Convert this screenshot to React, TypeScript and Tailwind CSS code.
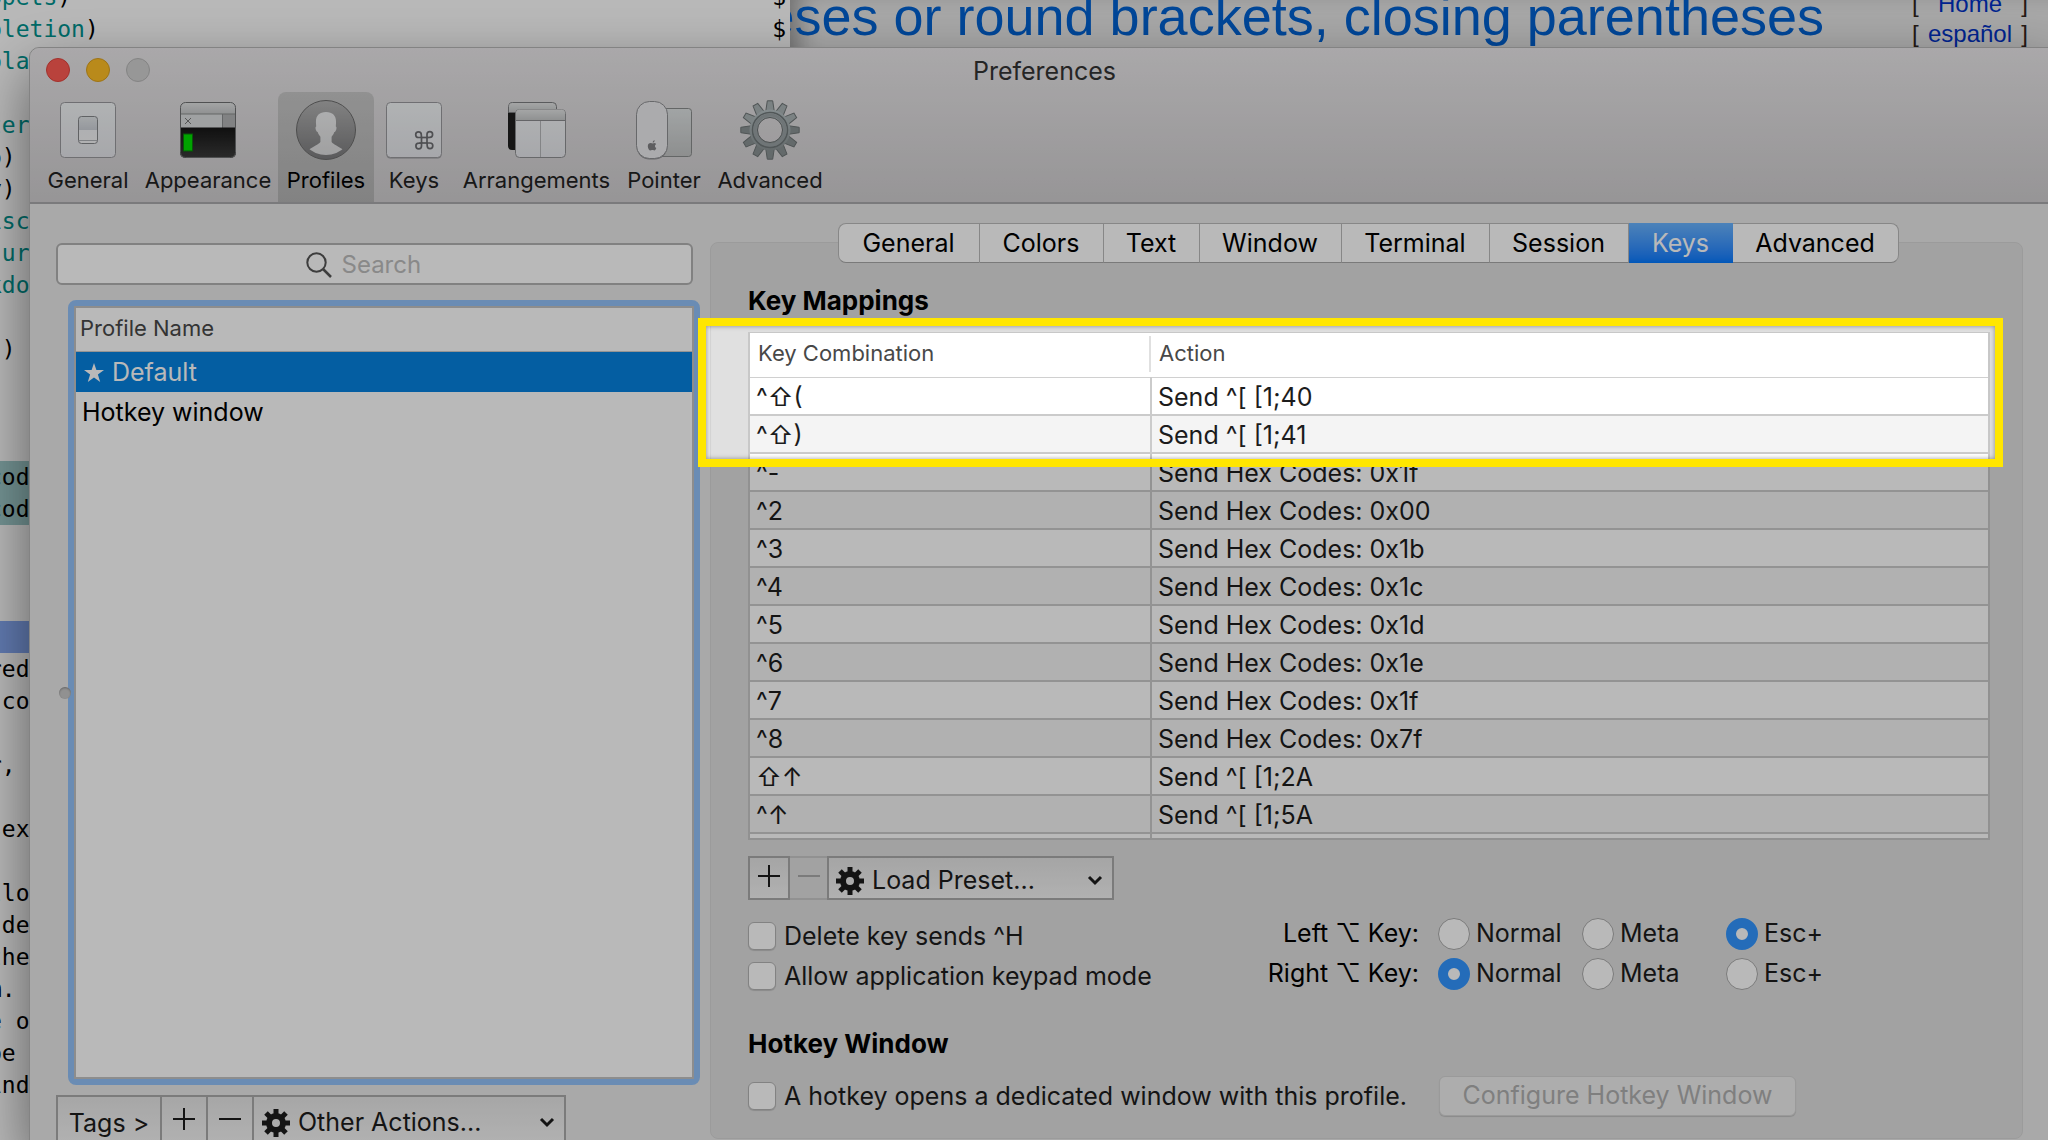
import React from "react";

const editorLines: { n: number; text: string; tone: string }[] = [
  { n: 0, text: "ppets", tone: "text-[#009490]" },
  { n: 1, text: "pletion", tone: "text-[#009490]" },
  { n: 2, text: "pla", tone: "text-[#009490]" },
  { n: 3, text: "", tone: "" },
  { n: 4, text: "ter", tone: "text-[#009490]" },
  { n: 5, text: "o)", tone: "text-black" },
  { n: 6, text: "y)", tone: "text-black" },
  { n: 7, text: "isc", tone: "text-[#009490]" },
  { n: 8, text: ":ur", tone: "text-[#009490]" },
  { n: 9, text: "kdo", tone: "text-[#009490]" },
  { n: 10, text: "", tone: "" },
  { n: 11, text: ".)", tone: "text-black" },
  { n: 12, text: "", tone: "" },
  { n: 13, text: "", tone: "" },
  { n: 14, text: "", tone: "" },
  { n: 15, text: "cod", tone: "text-black bg-[#a0cccc]" },
  { n: 16, text: "cod", tone: "text-black bg-[#a0cccc]" },
  { n: 17, text: "", tone: "" },
  { n: 18, text: "", tone: "" },
  { n: 19, text: "", tone: "" },
  { n: 20, text: "", tone: "bg-[#87aaf5]" },
  { n: 21, text: "red", tone: "text-black" },
  { n: 22, text: " co", tone: "text-black" },
  { n: 23, text: "", tone: "" },
  { n: 24, text: "r,", tone: "text-black" },
  { n: 25, text: "", tone: "" },
  { n: 26, text: "sex", tone: "text-black" },
  { n: 27, text: "", tone: "" },
  { n: 28, text: "llo", tone: "text-black" },
  { n: 29, text: " de", tone: "text-black" },
  { n: 30, text: "the", tone: "text-black" },
  { n: 31, text: "m.", tone: "text-black" },
  { n: 32, text: "e o", tone: "text-black" },
  { n: 33, text: "be", tone: "text-black" },
  { n: 34, text: "ind", tone: "text-black" },
];

function Desktop() {
  return (
    <div aria-hidden="true" className="absolute inset-0 flex overflow-hidden bg-white">
      <div className="flex w-[790px] shrink-0 justify-between overflow-hidden bg-white font-['DejaVu_Sans_Mono'] text-[23px] leading-8">
        <div className="-mt-[19px] -ml-3 w-60">
          {editorLines.map((line) => (
            <div key={line.n} className={`h-8 whitespace-pre ${line.tone}`}>
              {line.text}
              {line.n < 2 && <span className="text-black">)</span>}
            </div>
          ))}
        </div>
        <div className="-mt-[19px] mr-1 text-black">
          <div className="h-8">$</div>
          <div className="h-8">$</div>
        </div>
      </div>
      <div className="flex flex-1 items-start justify-end overflow-hidden bg-[#e8e8e8] pr-5 font-['Liberation_Sans'] shadow-[inset_20px_0_24px_-12px_rgba(0,0,0,0.35)]">
        <div className="-mt-[15px] mr-[88px] text-[54px] leading-[62px] whitespace-nowrap text-[#0062d3]">
          parentheses or round brackets, closing parentheses
        </div>
        <div className="-mt-[11px] w-[116px] shrink-0 text-2xl leading-[30px] text-[#33251c]">
          <div className="flex justify-between">
            <span>[</span>
            <span className="text-[#0032c5]">Home</span>
            <span>]</span>
          </div>
          <div className="flex justify-between">
            <span>[</span>
            <span className="text-[#0032c5]">español</span>
            <span>]</span>
          </div>
        </div>
      </div>
    </div>
  );
}

function GeneralIcon() {
  return (
    <svg viewBox="0 0 60 60" className="size-[60px]">
      <defs>
        <linearGradient id="plate" x1="0" y1="0" x2="0" y2="1">
          <stop offset="0" stopColor="#f3f6f7" />
          <stop offset="1" stopColor="#e6e7ec" />
        </linearGradient>
        <linearGradient id="toggle" x1="0" y1="0" x2="0" y2="1">
          <stop offset="0" stopColor="#e4e8ea" />
          <stop offset="0.5" stopColor="#cdd1d8" />
          <stop offset="0.5" stopColor="#f2f3f5" />
          <stop offset="1" stopColor="#f4f4f6" />
        </linearGradient>
      </defs>
      <rect x="2.5" y="2.5" width="55" height="55" rx="4" fill="url(#plate)" stroke="#9a9a9e" />
      <rect x="20.5" y="16.5" width="19" height="27" rx="3" fill="url(#toggle)" stroke="#85878b" />
      <path d="M21 40.5h18" stroke="#b0b2b6" />
    </svg>
  );
}

function AppearanceIcon() {
  return (
    <svg viewBox="0 0 60 60" className="size-[60px]">
      <defs>
        <linearGradient id="bar" x1="0" y1="0" x2="0" y2="1">
          <stop offset="0" stopColor="#e4e6e6" />
          <stop offset="1" stopColor="#c6c8c9" />
        </linearGradient>
        <linearGradient id="screen" x1="0" y1="0" x2="0" y2="1">
          <stop offset="0" stopColor="#161616" />
          <stop offset="1" stopColor="#3c3c3c" />
        </linearGradient>
        <clipPath id="frame">
          <rect x="2" y="2" width="56" height="56" rx="5" />
        </clipPath>
      </defs>
      <g clipPath="url(#frame)">
        <rect x="2" y="2" width="56" height="12" fill="url(#bar)" />
        <rect x="2" y="14" width="42" height="14" fill="#dcdee0" />
        <rect x="44" y="14" width="14" height="14" fill="#b2b3b5" />
        <path d="M2 14h56M44.5 14v14" stroke="#8b8d8e" />
        <rect x="2" y="27.500" width="56" height="31" fill="url(#screen)" />
        <path d="M7 18l6 6M13 18l-6 6" stroke="#777" />
        <rect x="5" y="33.500" width="10" height="18" fill="#0a7a0a" />
        <rect x="6" y="34.500" width="8" height="16" fill="#00e000" />
      </g>
      <rect x="2.5" y="2.500" width="55" height="55" rx="5" fill="none" stroke="#6f7072" />
    </svg>
  );
}

function ProfilesIcon() {
  return (
    <svg viewBox="0 0 60 60" className="size-[60px]">
      <defs>
        <linearGradient id="disc" x1="0" y1="0" x2="0" y2="1">
          <stop offset="0" stopColor="#b4b4b4" />
          <stop offset="1" stopColor="#7c7c7e" />
        </linearGradient>
        <linearGradient id="bust" x1="0" y1="0" x2="0" y2="1">
          <stop offset="0" stopColor="#eff0f1" />
          <stop offset="1" stopColor="#dcdcdd" />
        </linearGradient>
        <clipPath id="inner">
          <circle cx="30" cy="28" r="27" />
        </clipPath>
      </defs>
      <circle cx="30" cy="30" r="29.500" fill="url(#disc)" stroke="#6c6c6c" />
      <path
        clipPath="url(#inner)"
        d="M30 12c7 0 10.500 4 10 11 0 1.500-.2 2.500-.2 3.500 1.200.3.800 3-.4 4.800-.4.700-.9.800-1.200 1-.6 2-1.600 3.400-2.600 4.500v5.200c2 2.500 7 4.500 11.400 7.500L44 57H16l-3-7.500c4.400-3 9.400-5 11.400-7.500v-5.200c-1-1.100-2-2.500-2.600-4.500-.3-.2-.8-.3-1.200-1-1.200-1.800-1.600-4.500-.4-4.800 0-1-.2-2-.2-3.500-.5-7 3-11 10-11z"
        fill="url(#bust)"
      />
    </svg>
  );
}

function KeysIcon() {
  return (
    <svg viewBox="0 0 60 60" className="size-[60px]">
      <rect x="2.500" y="3.500" width="55" height="55" rx="4" fill="#97979b" />
      <rect x="2.500" y="2.500" width="55" height="55" rx="4" fill="url(#plate)" stroke="#9a9a9e" />
      <g fill="none" stroke="#6d6e72" strokeWidth="1.700">
        <rect x="37.500" y="37.500" width="5.500" height="5.500" />
        <path d="M37.500 37.500h-3a2.800 2.800 0 1 1 2.800-2.800zM43 37.500v-3a2.800 2.800 0 1 1 2.800 2.800zM43 43h3a2.800 2.800 0 1 1-2.800 2.800zM37.500 43v3a2.800 2.800 0 1 1-2.800-2.800z" />
      </g>
    </svg>
  );
}

function ArrangementsIcon() {
  return (
    <svg viewBox="0 0 60 60" className="size-[60px]">
      <path d="M1 12h12v38H5a4 4 0 0 1-4-4z" fill="#1f1f1f" />
      <path d="M1.500 12.500V6.500a4 4 0 0 1 4-4h40a4 4 0 0 1 4 4v6z" fill="url(#bar)" stroke="#7d7e80" />
      <rect x="8.500" y="9.500" width="50" height="48" rx="4" fill="url(#plate)" stroke="#8f9092" />
      <path d="M9 20v-6.500a4 4 0 0 1 4-4h41a4 4 0 0 1 4 4V20z" fill="url(#bar)" />
      <path d="M9 20.500h49" stroke="#8b8c8e" />
      <path d="M33.500 21v36" stroke="#b5b6b9" />
    </svg>
  );
}

function PointerIcon() {
  return (
    <svg viewBox="0 0 60 60" className="size-[60px]">
      <defs>
        <linearGradient id="pad" x1="0" y1="0" x2="0" y2="1">
          <stop offset="0" stopColor="#dfe3e4" />
          <stop offset="1" stopColor="#c3c5c5" />
        </linearGradient>
      </defs>
      <rect x="12.500" y="8.500" width="45" height="48" rx="3" fill="url(#pad)" stroke="#8b8d8d" />
      <rect x="2.500" y="2.500" width="31" height="57" rx="13" fill="#8f8f92" />
      <rect x="2.500" y="1.500" width="31" height="57" rx="13" fill="#ececef" stroke="#8f9093" />
      <path
        transform="translate(-1.500 0)"
        d="M20.500 43.400c-.8 0-1.400-.4-2.300-.4-1.600 0-2.900 1.200-2.900 3.200 0 2 1.400 4.300 2.700 4.300.6 0 .9-.4 1.900-.4s1.200.4 1.800.4c.9 0 1.800-1.400 2.100-2.500-1.900-.9-1.800-3-.1-4-.5-.6-1.200-1-2-1-.5 0-.9.400-1.200.4zM20.200 42.600c1.300-.1 2.100-1.200 2-2.400-1.200.1-2.100 1.200-2 2.400z"
        fill="#808084"
      />
    </svg>
  );
}

function AdvancedIcon() {
  return (
    <svg viewBox="0 0 60 60" className="size-[60px]">
      <defs>
        <linearGradient id="cog" gradientUnits="userSpaceOnUse" x1="0" y1="0" x2="0" y2="60">
          <stop offset="0" stopColor="#c0cbce" />
          <stop offset="1" stopColor="#828a8b" />
        </linearGradient>
        <mask id="hole">
          <rect width="60" height="60" fill="#fff" />
          <circle cx="30" cy="30" r="12.500" fill="#000" />
        </mask>
      </defs>
      <g mask="url(#hole)">
        {Array.from({ length: 12 }, (_, i) => (
          <path
            key={i}
            d="M25.500 13l1.800-12.200h5.400L34.500 13z"
            fill={i > 2 && i < 10 ? "#8b9394" : "#aab3b5"}
            stroke="#6e7576"
            transform={`rotate(${i * 30} 30 30)`}
          />
        ))}
        <circle cx="30" cy="30" r="20.500" fill="url(#cog)" />
        <circle cx="30" cy="30" r="17.500" fill="none" stroke="#70787a" strokeWidth="1.500" />
        <circle cx="30" cy="30" r="15" fill="none" stroke="#9aa2a4" strokeWidth="3" />
      </g>
      <circle cx="30" cy="30" r="12.500" fill="none" stroke="#676d6e" />
    </svg>
  );
}

function SmallGear() {
  return (
    <svg viewBox="0 0 28 28" className="size-7 shrink-0">
      <g stroke="#1c1c1c" strokeWidth="5">
        <path d="M14 0v9M14 19v9M0 14h9M19 14h9M4 4l6.500 6.500M17.500 17.500L24 24M24 4l-6.500 6.500M10.500 17.500L4 24" />
      </g>
      <circle cx="14" cy="14" r="7" fill="none" stroke="#1c1c1c" strokeWidth="6" />
    </svg>
  );
}

function Chevron() {
  return (
    <svg viewBox="0 0 16 16" className="pointer-events-none size-4 shrink-0">
      <path d="M2 4l6 6 6-6" fill="none" stroke="#1c1c1c" strokeWidth="3" />
    </svg>
  );
}

function Plus() {
  return (
    <svg viewBox="0 0 22 22" className="size-[22px]">
      <path d="M11 0v22M0 11h22" stroke="currentColor" strokeWidth="2" />
    </svg>
  );
}

function Minus() {
  return (
    <svg viewBox="0 0 22 22" className="size-[22px]">
      <path d="M0 11h22" stroke="currentColor" strokeWidth="2" />
    </svg>
  );
}

const toolbar = [
  { label: "General", icon: <GeneralIcon />, width: "w-[100px]" },
  { label: "Appearance", icon: <AppearanceIcon />, width: "w-[140px]" },
  { label: "Profiles", icon: <ProfilesIcon />, width: "w-24" },
  { label: "Keys", icon: <KeysIcon />, width: "w-20" },
  { label: "Arrangements", icon: <ArrangementsIcon />, width: "w-[165px]" },
  { label: "Pointer", icon: <PointerIcon />, width: "w-[90px]" },
  { label: "Advanced", icon: <AdvancedIcon />, width: "w-[122px]" },
];

const tabs = [
  { label: "General", width: "w-[142px]" },
  { label: "Colors", width: "w-[124px]" },
  { label: "Text", width: "w-24" },
  { label: "Window", width: "w-[142px]" },
  { label: "Terminal", width: "w-[148px]" },
  { label: "Session", width: "w-[139px]" },
  { label: "Keys", width: "w-[104px]" },
  { label: "Advanced", width: "w-[166px]" },
];

const mappings = [
  ["^⇧(", "Send ^[ [1;40"],
  ["^⇧)", "Send ^[ [1;41"],
  ["^-", "Send Hex Codes: 0x1f"],
  ["^2", "Send Hex Codes: 0x00"],
  ["^3", "Send Hex Codes: 0x1b"],
  ["^4", "Send Hex Codes: 0x1c"],
  ["^5", "Send Hex Codes: 0x1d"],
  ["^6", "Send Hex Codes: 0x1e"],
  ["^7", "Send Hex Codes: 0x1f"],
  ["^8", "Send Hex Codes: 0x7f"],
  ["⇧↑", "Send ^[ [1;2A"],
  ["^↑", "Send ^[ [1;5A"],
];

function TitleBar() {
  return (
    <header className="h-[156px] rounded-t-[10px] border-b-2 border-[#a9a9ab] bg-linear-to-b from-[#eae8ea] to-[#d0ced0]">
      <div className="relative flex h-11 items-center justify-center pt-0.5">
        <div className="absolute top-2.5 left-4 flex gap-4">
          <button aria-label="Close" className="size-6 rounded-full border border-[#e0443e] bg-[#ff5c53]" />
          <button aria-label="Minimize" className="size-6 rounded-full border border-[#d9a020] bg-[#ffbf26]" />
          <button aria-label="Zoom" className="size-6 rounded-full border border-[#b6b6b6] bg-[#d0d0d0]" />
        </div>
        <h1 className="text-[25px] leading-8 text-[#333]">Preferences</h1>
      </div>
      <nav className="flex h-[110px] pl-2">
        {toolbar.map((item) => (
          <button
            key={item.label}
            className={`flex shrink-0 flex-col items-center rounded-t-lg pt-2 text-[22px] leading-7 ${item.width} ${
              item.label === "Profiles" ? "bg-linear-to-b from-[#c8c8c8] to-[#b4b4b4] text-black" : "text-[#222]"
            }`}
          >
            {item.icon}
            <span className="mt-1.5">{item.label}</span>
          </button>
        ))}
      </nav>
    </header>
  );
}

function Sidebar() {
  return (
    <aside className="flex flex-col pt-[39px] pl-[26px]">
      <label className="mr-[17px] flex h-[42px] shrink-0 items-center justify-center gap-2.5 rounded-md border-2 border-[#b2b2b2] bg-white pt-0.5 pr-2">
        <svg viewBox="0 0 26 26" className="size-[26px] shrink-0">
          <circle cx="10.500" cy="10.500" r="9.200" fill="none" stroke="#555" strokeWidth="2" />
          <path d="M17 17l8 8" stroke="#555" strokeWidth="2.500" />
        </svg>
        <input
          type="text"
          aria-label="Search"
          placeholder="Search"
          className="w-[94px] bg-transparent text-[24px] leading-8 outline-none placeholder:text-[#bdbdbd]"
        />
      </label>
      <div className="relative mt-[15px] mr-[10px] ml-3 flex-1 rounded-lg border-[6px] border-[#93c2f9]">
        <div className="h-full border-2 border-[#c3c3c3] bg-white">
          <h2 className="flex h-11 items-center border-b border-[#ccc] px-1 pb-0.5 text-[22px] text-[#484848]">
            Profile Name
          </h2>
          <ul className="text-[25px]">
            <li className="flex h-10 items-center gap-2 bg-[#0682e0] pt-0.5 pl-2 text-white">
              <svg viewBox="0 0 20 20" className="size-5">
                <path d="M10 0l2.400 7.100H20l-6.100 4.500 2.300 7.400L10 14.600 3.800 19l2.300-7.400L0 7.100h7.600z" fill="currentColor" />
              </svg>
              Default
            </li>
            <li className="flex h-10 items-center pt-0.5 pl-1.5 text-black">Hotkey window</li>
          </ul>
        </div>
        <span className="absolute top-[381px] -left-[15px] size-3 rounded-full bg-[#c8c8c8] shadow-[inset_0_1px_2px_rgba(0,0,0,0.3)]" />
      </div>
      <div className="mt-2.5 flex h-12 w-[510px] shrink-0 border-2 border-[#aaa] bg-linear-to-b from-[#e6e6e6] to-[#f4f4f4] text-[25px] text-[#1c1c1c]">
        <button className="w-[104px] border-r-2 border-[#aaa] pt-2">Tags &gt;</button>
        <button aria-label="Add profile" className="grid w-[46px] place-items-center border-r-2 border-[#aaa]">
          <Plus />
        </button>
        <button aria-label="Remove profile" className="grid w-[46px] place-items-center border-r-2 border-[#aaa]">
          <Minus />
        </button>
        <label className="flex flex-1 items-center pt-2 pr-[9px] pl-2">
          <SmallGear />
          <select aria-label="Other actions" className="ml-2 flex-1 appearance-none bg-transparent outline-none">
            <option>Other Actions...</option>
          </select>
          <Chevron />
        </label>
      </div>
    </aside>
  );
}

function MappingTable() {
  return (
    <div className="relative mt-[6px]">
      <div className="h-[508px] overflow-hidden border-2 border-t border-[#c8c8c8] bg-white">
        <table className="w-full table-fixed border-collapse">
          <colgroup>
            <col className="w-[401px]" />
            <col />
          </colgroup>
          <thead>
            <tr className="h-11 border-b border-[#d0d0d0] text-left text-[22px] text-[#484848]">
              <th className="p-0 pb-px font-normal">
                <div className="flex h-9 items-center border-r-2 border-[#e0e0e0] pl-2 pb-0.5">Key Combination</div>
              </th>
              <th className="p-0 pb-0.5 pl-2 font-normal">Action</th>
            </tr>
          </thead>
          <tbody className="text-[25px] leading-[34px] text-[#1c1c1c]">
            {mappings.map(([combo, action]) => (
              <tr key={combo} className="h-[38px] border-b-2 border-[#cbcbcb] even:bg-[#f4f4f4]">
                <td className="border-r-2 border-[#cbcbcb] p-0 pt-0.5 pl-1.5">{combo}</td>
                <td className="p-0 pt-0.5 pl-1.5">{action}</td>
              </tr>
            ))}
            <tr className="h-2">
              <td className="border-r-2 border-[#cbcbcb] p-0" />
              <td className="p-0" />
            </tr>
          </tbody>
        </table>
      </div>
      {/* Spotlight frame: its spread shadow dims everything outside the frame */}
      <div className="pointer-events-none absolute -top-[14px] -right-[13px] -left-[50px] z-20 h-[149px] border-8 border-[#ffe600] shadow-[0_0_0_3000px_rgba(0,0,0,0.275),inset_0_0_5px_rgba(0,0,0,0.4)]" />
    </div>
  );
}

const checkbox =
  "size-7 shrink-0 appearance-none rounded-md border border-[#b4b4b4] bg-white shadow-[0_1px_1px_rgba(0,0,0,0.15)] checked:bg-[#3296ff]";
const radio =
  "size-8 shrink-0 appearance-none rounded-full border border-[#aaa] bg-white checked:border-[10px] checked:border-[#3296ff]";

function OptionKeyRow({ side, value }: { side: string; value: string }) {
  return (
    <fieldset className="grid h-10 grid-cols-[180px_144px_144px_110px] items-center">
      <legend className="contents">
        <span className="pr-[19px] text-right text-black">{side} ⌥ Key:</span>
      </legend>
      {["Normal", "Meta", "Esc+"].map((option) => (
        <label key={option} className="flex items-center gap-1.5">
          <input type="radio" name={side} defaultChecked={option === value} className={radio} />
          {option}
        </label>
      ))}
    </fieldset>
  );
}

function KeysPanel() {
  return (
    <section className="mt-[38px] mr-9 mb-1 rounded-lg border border-[#d6d6d6] bg-[#e0e0e0] pr-8 pl-[37px]">
      <div role="tablist" className="-mt-5 flex justify-center pr-0.5 text-[25px] leading-9">
        {tabs.map((tab) => (
          <button
            key={tab.label}
            role="tab"
            aria-selected={tab.label === "Keys"}
            className={`h-10 shrink-0 first:rounded-l-lg last:rounded-r-lg ${tab.width} ${
              tab.label === "Keys"
                ? "bg-linear-to-b from-[#6ab4ff] to-[#0079ff] text-white"
                : "border-y border-r border-[#bbb] border-b-[#a8a8a8] bg-white text-black first:border-l"
            }`}
          >
            {tab.label}
          </button>
        ))}
      </div>
      <h2 className="mt-5 h-[43px] text-[26px] leading-9 font-bold text-black">Key Mappings</h2>
      <MappingTable />
      <div className="mt-4 flex h-11 text-[25px] text-[#1c1c1c]">
        <button
          aria-label="Add mapping"
          className="grid w-[42px] place-items-center border-2 border-[#aaa] bg-linear-to-b from-[#e4e4e4] to-[#f4f4f4] pb-1"
        >
          <Plus />
        </button>
        <button
          aria-label="Remove mapping"
          className="grid w-[37px] place-items-center border-y-2 border-[#c8c8c8] pb-1 text-[#aaa]"
        >
          <Minus />
        </button>
        <label className="flex w-[287px] items-center border-2 border-[#aaa] bg-linear-to-b from-[#e4e4e4] to-[#f4f4f4] pt-1.5 pr-[9px] pl-[7px]">
          <SmallGear />
          <select aria-label="Load preset" className="ml-2 flex-1 appearance-none bg-transparent outline-none">
            <option>Load Preset...</option>
          </select>
          <Chevron />
        </label>
      </div>
      <div className="mt-[14px] flex text-[25px] text-[#1c1c1c]">
        <div className="w-[510px] pt-0.5">
          {["Delete key sends ^H", "Allow application keypad mode"].map((label) => (
            <label key={label} className="flex h-10 items-center gap-2">
              <input type="checkbox" className={checkbox} />
              <span className="pt-0.5">{label}</span>
            </label>
          ))}
        </div>
        <div>
          <OptionKeyRow side="Left" value="Esc+" />
          <OptionKeyRow side="Right" value="Normal" />
        </div>
      </div>
      <h2 className="mt-[30px] text-[26px] leading-9 font-bold text-black">Hotkey Window</h2>
      <div className="mt-3 flex h-11 items-center text-[25px] text-[#1c1c1c]">
        <label className="flex items-center gap-2">
          <input type="checkbox" className={checkbox} />
          <span className="pt-0.5">A hotkey opens a dedicated window with this profile.</span>
        </label>
        <button
          disabled
          className="ml-8 h-10 w-[357px] rounded-md border border-[#d4d4d4] bg-[#efefef] text-[#b0b0b0] shadow-[0_1px_1px_rgba(0,0,0,0.15)]"
        >
          Configure Hotkey Window
        </button>
      </div>
    </section>
  );
}

export default function App() {
  return (
    <div className="relative h-screen overflow-hidden font-[Inter,'Liberation_Sans',sans-serif]">
      <Desktop />
      <main className="relative -mr-3 ml-[29px] flex h-full flex-col pt-[47px]">
        <div className="-mb-1 flex flex-1 flex-col rounded-t-[10px] border border-[#b5b5b5] bg-[#e9e9e9] shadow-[0_24px_60px_rgba(0,0,0,0.5)]">
          <TitleBar />
          <div className="grid flex-1 grid-cols-[680px_1fr]">
            <Sidebar />
            <KeysPanel />
          </div>
        </div>
      </main>
    </div>
  );
}
